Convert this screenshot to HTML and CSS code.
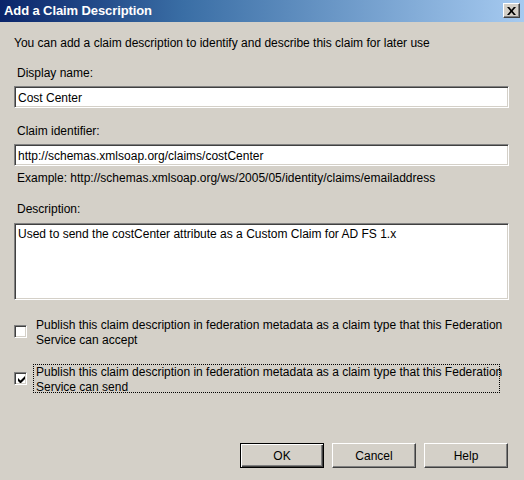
FILE: index.html
```html
<!DOCTYPE html>
<html>
<head>
<meta charset="utf-8">
<title>Add a Claim Description</title>
<link rel="stylesheet" href="styles.css">
</head>
<body>
<div class="dialog">
  <div class="titlebar">
    <span class="title">Add a Claim Description</span>
    <span class="close"><svg width="9" height="8" viewBox="0 0 9 8"><path d="M0 0h2.2l2.3 2.8L6.8 0H9L5.6 4 9 8H6.8L4.5 5.2 2.2 8H0l3.4-4z" fill="#000"/></svg></span>
  </div>
  <div class="body">
    <p class="intro">You can add a claim description to identify and describe this claim for later use</p>
    <p class="label l-first">Display name:</p>
    <div class="field">Cost Center</div>
    <p class="label">Claim identifier:</p>
    <div class="field">http://schemas.xmlsoap.org/claims/costCenter</div>
    <p class="example">Example: http://schemas.xmlsoap.org/ws/2005/05/identity/claims/emailaddress</p>
    <p class="label">Description:</p>
    <div class="field area">Used to send the costCenter attribute as a Custom Claim for AD FS 1.x</div>
    <div class="check c-first">
      <span class="box"></span>
      <span class="ctext">Publish this claim description in federation metadata as a claim type that this Federation<br>Service can accept</span>
    </div>
    <div class="check c-second">
      <span class="box"><svg width="7" height="7" viewBox="0 0 7 7"><path d="M0 2v3l2 2h1l4-4V0L2.5 4.5z" fill="#000"/></svg></span>
      <span class="ctext focus">Publish this claim description in federation metadata as a claim type that this Federation<br>Service can send</span>
    </div>
    <div class="buttons">
      <button class="btn default">OK</button>
      <button class="btn">Cancel</button>
      <button class="btn">Help</button>
    </div>
  </div>
</div>
</body>
</html>
```

FILE: styles.css
```css
* { box-sizing: border-box; }
html, body { margin: 0; padding: 0; }
body { background: #d4d0c8; font-family: "Liberation Sans", Arial, sans-serif; font-size: 12px; color: #000; }
.dialog { width: 524px; height: 480px; background: #d4d0c8; display: flex; flex-direction: column; }
.titlebar { height: 22px; background: linear-gradient(to right, #0a246a 0%, #3a6ea5 35%, #a6caf0 100%); display: flex; align-items: center; justify-content: space-between; padding: 0 4px 1px 4px; }
.title { color: #fff; font-weight: bold; font-size: 13px; letter-spacing: -0.1px; }
.close { width: 17px; height: 15px; background: #d4d0c8; border: 1px solid; border-color: #fff #404040 #404040 #fff; box-shadow: inset -1px -1px #808080; display: flex; align-items: center; justify-content: center; }
.body { flex: 1; display: flex; flex-direction: column; padding: 0 15px 12px 14px; }
p { margin: 0; line-height: 15px; }
.intro { margin-top: 14px; }
.label { margin-top: 16px; padding-left: 3px; }
.l-first { margin-top: 15px; }
.field { margin-top: 5px; height: 22px; background: #fff; border: 1px solid; border-color: #808080 #fff #fff #808080; box-shadow: inset 1px 1px #404040, inset -1px -1px #d4d0c8; padding: 4px 3px 0 3px; line-height: 15px; white-space: nowrap; }
.example { margin-top: 5px; padding-left: 3px; }
.area { margin-top: 6px; height: 77px; padding-top: 3px; }
.check { display: flex; align-items: flex-start; }
.c-first { margin-top: 17px; }
.c-second { margin-top: 15px; }
.box { width: 13px; height: 13px; margin-top: 8px; background: #fff; border: 1px solid; border-color: #808080 #fff #fff #808080; box-shadow: inset 1px 1px #404040, inset -1px -1px #d4d0c8; display: flex; align-items: center; justify-content: center; padding: 1px 0 0 1px; flex: none; }
.ctext { margin-left: 6px; padding: 0 2px; line-height: 15px; border: 1px solid transparent; white-space: nowrap; width: 467px; }
.focus { border: 1px dotted #000; height: 29px; }
.buttons { margin-top: auto; display: flex; justify-content: flex-end; gap: 8px; padding-right: 1px; }
.btn { width: 84px; height: 25px; font-family: "Liberation Sans", Arial, sans-serif; font-size: 12px; color: #000; background: #d4d0c8; border: 1px solid; border-color: #fff #404040 #404040 #fff; box-shadow: inset -1px -1px #808080; padding: 0; margin: 0; }
.btn.default { border: 1px solid #000; box-shadow: inset 1px 1px #fff, inset -1px -1px #404040, inset -2px -2px #808080; }
```
